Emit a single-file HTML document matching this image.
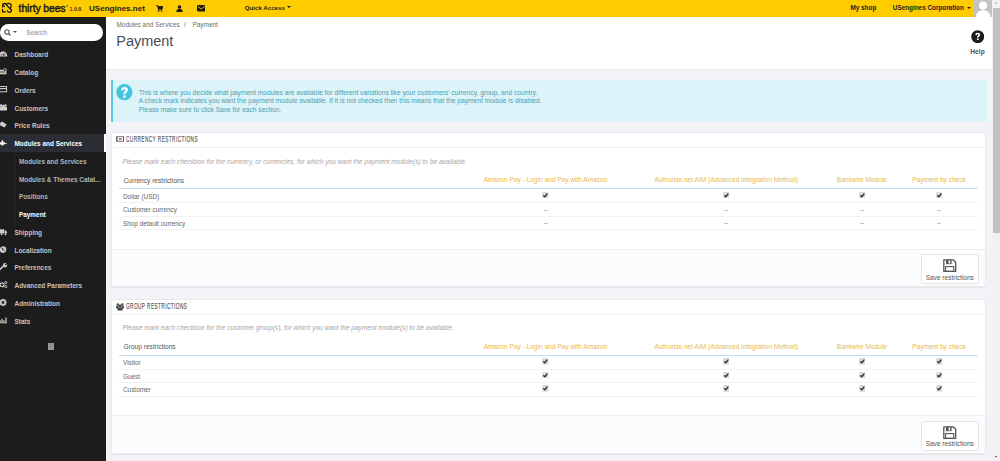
<!DOCTYPE html>
<html><head><meta charset="utf-8">
<style>
*{box-sizing:border-box}
html,body{margin:0;padding:0}
body{width:1000px;height:461px;overflow:hidden;position:relative;background:#f3f3f7;font-family:"Liberation Sans",sans-serif;color:#555}
.a{position:absolute;white-space:nowrap;line-height:1}
#hdr{position:absolute;left:0;top:0;width:993px;height:17px;background:#ffcc00}
#side{position:absolute;left:0;top:17px;width:106px;height:444px;background:#1c1c1c}
#chead{position:absolute;left:106px;top:17px;width:887px;height:53px;background:#fff;border-bottom:1px solid #e9e9ec}
#sb{position:absolute;left:992px;top:0;width:8px;height:461px;background:#f1f1f1}
#thumb{position:absolute;left:993px;top:7.5px;width:7px;height:225px;background:#c1c1c1}
.panel{position:absolute;left:111px;width:875px;background:#fff;border:1px solid #e8e8ee;border-radius:3px;box-shadow:0 1px 0 rgba(0,0,0,.05)}
.ph{position:absolute;left:2px;right:2px;top:14.2px;height:1px;background:#f0f0f0}
.pf{position:absolute;left:0;right:0;bottom:0;height:37.5px;background:#fbfcfe;border-top:1px solid #eeeeee;border-radius:0 0 3px 3px}
.btn{position:absolute;right:6px;top:4.8px;width:58px;height:29.8px;background:#fff;border:1px solid #e6e6e6;border-radius:2px}
.cb{width:6.2px;height:6.2px;background:#d4d4d4;border:0.6px solid #9a9a9a;border-radius:1px}
</style></head>
<body>
<div id="hdr"></div>
<svg class="a" style="left:0;top:1px" width="14" height="14" viewBox="0 0 14 14"><g fill="none" stroke="#1c1c1c" stroke-width="1.35" stroke-linecap="round" stroke-linejoin="round">
<path d="M2.9 6 C2.3 4.6 2.5 2.8 4.2 2.5 C5.2 2.3 5.8 2.8 6.2 3.5 L9.6 7.4"/>
<path d="M3.6 4.9 L4.4 5.3"/>
<path d="M6.2 3.5 C7 2.1 9.6 1.9 10.8 3.3 C11.7 4.5 11.1 6.6 9.6 7.4"/>
<path d="M2.5 8.4 V10.9 H5.3"/>
<path d="M7.4 9.6 C7.8 10.8 8.8 11.6 10 11.4 C11.2 11.2 11.5 10 11.3 9 C11.1 8.1 10.5 7.7 9.6 7.4"/>
</g></svg>
<div class="a" style="left:18.6px;top:4px;font-size:10.4px;color:#1c1c1c;font-weight:normal;font-style:normal;letter-spacing:-0.1px;-webkit-text-stroke:0.45px #1c1c1c;transform:scaleY(1.12);transform-origin:0 85%">thirty bees</div>
<div class="a" style="left:66.2px;top:4.6px;width:1.8px;height:1.8px;border:0.5px solid #6a5a10;border-radius:50%"></div>
<div class="a" style="left:69.6px;top:7px;font-size:5.3px;color:#3a3a10;font-weight:bold;font-style:normal;letter-spacing:-0.05px">1.0.8</div>
<div class="a" style="left:89px;top:5px;font-size:8.06px;color:#1c1c1c;font-weight:bold;font-style:normal;">USengines.net</div>
<svg class="a" style="left:155.8px;top:5.2px" width="7.4" height="6.8" viewBox="0 0 7.4 6.8"><path d="M0.3 0.5 H1.5 L2.3 4.3 H6 L6.9 1.5 H1.9" fill="#1c1c1c" stroke="#1c1c1c" stroke-width="0.9" stroke-linejoin="round"/><circle cx="2.7" cy="5.9" r="0.8" fill="#1c1c1c"/><circle cx="5.6" cy="5.9" r="0.8" fill="#1c1c1c"/></svg>
<svg class="a" style="left:176px;top:4.5px" width="7" height="7.5" viewBox="0 0 7 7.5"><circle cx="3.5" cy="2" r="1.8" fill="#1c1c1c"/><path d="M0.3 7.3 C0.3 4.6 1.6 4 3.5 4 C5.4 4 6.7 4.6 6.7 7.3 Z" fill="#1c1c1c"/></svg>
<svg class="a" style="left:197px;top:5.3px" width="8.4" height="6.4" viewBox="0 0 8.4 6.4"><rect x="0" y="0" width="8.4" height="6.4" rx="0.8" fill="#1c1c1c"/><path d="M0.6 1.4 L4.2 3.9 L7.8 1.4" fill="none" stroke="#ffcc00" stroke-width="0.8"/></svg>
<div class="a" style="left:244.8px;top:5px;font-size:6.15px;color:#1c1c1c;font-weight:bold;font-style:normal;">Quick Access</div>
<div class="a" style="left:287px;top:6.4px;width:0;height:0;border-left:2.1px solid transparent;border-right:2.1px solid transparent;border-top:2.7px solid #1c1c1c"></div>
<div class="a" style="left:850.4px;top:5px;font-size:6.4px;color:#1c1c1c;font-weight:bold;font-style:normal;">My shop</div>
<div class="a" style="left:892.8px;top:5px;font-size:6.36px;color:#1c1c1c;font-weight:bold;font-style:normal;">USengines Corporation</div>
<div class="a" style="left:967.3px;top:7px;width:0;height:0;border-left:2px solid transparent;border-right:2px solid transparent;border-top:2.5px solid #1c1c1c"></div>
<svg class="a" style="left:973.5px;top:0" width="18.5" height="17" viewBox="0 0 18.5 17"><rect width="18.5" height="17" fill="#c3c3c3"/><circle cx="9.1" cy="5.6" r="4.1" fill="#fff"/><path d="M1.9 17 C2.2 12.4 4.6 10.2 9.1 10.2 C13.6 10.2 16.2 12.4 16.5 17 Z" fill="#fff"/></svg>
<div id="side"></div>
<div class="a" style="left:-0.5px;top:24px;width:103px;height:16.7px;background:#fff;border-radius:8.3px"></div>
<svg class="a" style="left:3.8px;top:29px" width="7" height="7" viewBox="0 0 7 7"><circle cx="2.9" cy="2.9" r="2.2" fill="none" stroke="#555" stroke-width="1.1"/><path d="M4.5 4.5 L6.5 6.5" stroke="#555" stroke-width="1.3"/></svg>
<div class="a" style="left:13px;top:31.3px;width:0;height:0;border-left:2px solid transparent;border-right:2px solid transparent;border-top:2.3px solid #555"></div>
<div class="a" style="left:26.2px;top:30px;font-size:6.3px;color:#aaa;font-weight:bold;font-style:normal;">Search</div>
<div class="a" style="left:0;top:134.3px;width:104px;height:17.8px;background:#2a2e34"></div>
<div class="a" style="left:104px;top:134.3px;width:2px;height:17.8px;background:#fff"></div>
<div class="a" style="left:13.5px;top:152.70px;width:0.8px;height:71.00px;background:#2a2a2a"></div>
<div class="a" style="left:14.5px;top:52px;font-size:6.45px;color:#c4c4c4;font-weight:bold;font-style:normal;">Dashboard</div>
<div class="a" style="left:14.5px;top:70px;font-size:6.45px;color:#c4c4c4;font-weight:bold;font-style:normal;">Catalog</div>
<div class="a" style="left:14.5px;top:88px;font-size:6.45px;color:#c4c4c4;font-weight:bold;font-style:normal;">Orders</div>
<div class="a" style="left:14.5px;top:106px;font-size:6.45px;color:#c4c4c4;font-weight:bold;font-style:normal;">Customers</div>
<div class="a" style="left:14.5px;top:123px;font-size:6.45px;color:#c4c4c4;font-weight:bold;font-style:normal;">Price Rules</div>
<div class="a" style="left:14.5px;top:141px;font-size:6.45px;color:#ffffff;font-weight:bold;font-style:normal;">Modules and Services</div>
<div class="a" style="left:18.9px;top:159px;font-size:6.45px;color:#b4b4b4;font-weight:bold;font-style:normal;">Modules and Services</div>
<div class="a" style="left:18.9px;top:177px;font-size:6.45px;color:#b4b4b4;font-weight:bold;font-style:normal;">Modules &amp; Themes Catal...</div>
<div class="a" style="left:18.9px;top:194px;font-size:6.45px;color:#b4b4b4;font-weight:bold;font-style:normal;">Positions</div>
<div class="a" style="left:18.9px;top:212px;font-size:6.45px;color:#ffffff;font-weight:bold;font-style:normal;">Payment</div>
<div class="a" style="left:14.5px;top:230px;font-size:6.45px;color:#c4c4c4;font-weight:bold;font-style:normal;">Shipping</div>
<div class="a" style="left:14.5px;top:248px;font-size:6.45px;color:#c4c4c4;font-weight:bold;font-style:normal;">Localization</div>
<div class="a" style="left:14.5px;top:265px;font-size:6.45px;color:#c4c4c4;font-weight:bold;font-style:normal;">Preferences</div>
<div class="a" style="left:14.5px;top:283px;font-size:6.45px;color:#c4c4c4;font-weight:bold;font-style:normal;">Advanced Parameters</div>
<div class="a" style="left:14.5px;top:301px;font-size:6.45px;color:#c4c4c4;font-weight:bold;font-style:normal;">Administration</div>
<div class="a" style="left:14.5px;top:319px;font-size:6.45px;color:#c4c4c4;font-weight:bold;font-style:normal;">Stats</div>
<svg class="a" style="left:0;top:50.2px" width="8" height="8" viewBox="0 0 8 8"><path d="M-1.3 6.6 A4.3 5.4 0 0 1 7.3 6.6 Z" fill="#cdcdcd"/><circle cx="1.2" cy="4.8" r="0.6" fill="#1c1c1c"/><circle cx="4.8" cy="4.8" r="0.6" fill="#1c1c1c"/><path d="M3 6 L4.2 3" stroke="#1c1c1c" stroke-width="0.8"/></svg>
<svg class="a" style="left:0;top:68.4px" width="8" height="8" viewBox="0 0 8 8"><path d="M-1 1.8 H3.2 L4 0.4 H6.4 V6.2 H-1 Z" fill="#cdcdcd"/><rect x="3.9" y="1.2" width="1.8" height="1.6" fill="#1c1c1c"/><rect x="-1" y="3.6" width="6" height="0.8" fill="#1c1c1c"/></svg>
<svg class="a" style="left:0;top:86.2px" width="8" height="8" viewBox="0 0 8 8"><rect x="-1" y="0.5" width="7.6" height="5.3" fill="none" stroke="#cdcdcd" stroke-width="1"/><rect x="-1" y="2" width="7.6" height="1.2" fill="#cdcdcd"/></svg>
<svg class="a" style="left:0;top:104.2px" width="8" height="8" viewBox="0 0 8 8"><circle cx="1" cy="1.4" r="1.2" fill="#cdcdcd"/><circle cx="5.4" cy="1.4" r="1.2" fill="#cdcdcd"/><circle cx="3.2" cy="2.2" r="1.4" fill="#cdcdcd"/><path d="M-1 6.4 V3.8 C-1 3 -0.2 2.7 0.8 2.7 H5.6 C6.6 2.7 7 3.1 7 3.9 V6.4 Z" fill="#cdcdcd"/></svg>
<svg class="a" style="left:0;top:121.2px" width="8" height="8" viewBox="0 0 8 8"><path d="M-0.5 2.2 L2.2 0.6 L6.6 3.6 L4.6 6.6 L0.4 4.4 Z" fill="#cdcdcd"/></svg>
<svg class="a" style="left:0;top:138.8px" width="8" height="8" viewBox="0 0 8 8"><path d="M0 3.2 H1.6 V1.2 H3.2 V3.2 H4.6 L5.4 4 H6.8 V4.7 H5.4 L4.6 5.4 H3.2 V6.4 H1.6 V5.4 H0 Z" fill="#fff"/></svg>
<svg class="a" style="left:0;top:228.6px" width="8" height="8" viewBox="0 0 8 8"><rect x="-1" y="0.3" width="5.2" height="4.2" fill="#cdcdcd"/><path d="M4.6 1.4 H6 L7 2.8 V4.5 H4.6 Z" fill="#cdcdcd"/><circle cx="1.6" cy="5.3" r="0.9" fill="#cdcdcd"/><circle cx="5.4" cy="5.3" r="0.9" fill="#cdcdcd"/></svg>
<svg class="a" style="left:0;top:245.6px" width="8" height="8" viewBox="0 0 8 8"><circle cx="3" cy="3.6" r="3.3" fill="#cdcdcd"/><path d="M1.2 2 C2.2 1.6 3.2 2.4 2.6 3.4 C2.2 4.2 3.6 4.6 4.6 4" fill="none" stroke="#1c1c1c" stroke-width="0.9"/></svg>
<svg class="a" style="left:0;top:263px" width="8" height="8" viewBox="0 0 8 8"><path d="M0 6.4 L3.6 2.8" stroke="#cdcdcd" stroke-width="1.6" stroke-linecap="round"/><path d="M3 2.4 A2.2 2.2 0 0 1 6.2 0.2 L4.8 1.8 L5.4 2.6 L7 1.2 A2.2 2.2 0 0 1 4.2 4.2 Z" fill="#cdcdcd"/></svg>
<svg class="a" style="left:0;top:281px" width="8" height="8" viewBox="0 0 8 8"><circle cx="2" cy="3.8" r="1.9" fill="none" stroke="#cdcdcd" stroke-width="1.3"/><circle cx="5.8" cy="1.6" r="1.1" fill="none" stroke="#cdcdcd" stroke-width="0.9"/><circle cx="5.8" cy="5.6" r="1.1" fill="none" stroke="#cdcdcd" stroke-width="0.9"/></svg>
<svg class="a" style="left:0;top:298.6px" width="8" height="8" viewBox="0 0 8 8"><circle cx="3" cy="3.4" r="2.6" fill="none" stroke="#cdcdcd" stroke-width="1.5"/><path d="M3 0 V6.8 M-0.4 3.4 H6.4 M0.6 1 L5.4 5.8 M5.4 1 L0.6 5.8" stroke="#cdcdcd" stroke-width="0.8"/><circle cx="3" cy="3.4" r="1.1" fill="#1c1c1c"/></svg>
<svg class="a" style="left:0;top:317.4px" width="8" height="8" viewBox="0 0 8 8"><rect x="-1" y="5.4" width="8" height="0.9" fill="#cdcdcd"/><rect x="-0.6" y="3" width="1.2" height="2.6" fill="#cdcdcd"/><rect x="1.4" y="1.8" width="1.2" height="3.8" fill="#cdcdcd"/><rect x="3.4" y="3.2" width="1.2" height="2.4" fill="#cdcdcd"/><rect x="5.4" y="0.4" width="1.2" height="5.2" fill="#cdcdcd"/></svg>
<svg class="a" style="left:48px;top:343px" width="6" height="7.2" viewBox="0 0 6 7.2"><rect x="0" y="0" width="6" height="7.2" fill="#999"/><rect x="2" y="0.5" width="0.5" height="6.2" fill="#7c7c7c"/><rect x="3.6" y="0.5" width="0.5" height="6.2" fill="#7c7c7c"/></svg>
<div id="chead"></div>
<div class="a" style="left:116.5px;top:22px;font-size:6.44px;color:#6c6c6c;font-weight:normal;font-style:normal;">Modules and Services</div>
<div class="a" style="left:184px;top:22px;font-size:6.44px;color:#6c6c6c;font-weight:normal;font-style:normal;">/</div>
<div class="a" style="left:192.5px;top:22px;font-size:6.44px;color:#6c6c6c;font-weight:normal;font-style:normal;">Payment</div>
<div class="a" style="left:116.3px;top:34px;font-size:14.45px;color:#474c55;font-weight:normal;font-style:normal;">Payment</div>
<svg class="a" style="left:970.6px;top:29.8px" width="13.4" height="13.4" viewBox="0 0 14 14"><circle cx="7" cy="7" r="6.8" fill="#1c1c1c"/><path d="M4.6 5.2 C4.6 3.6 5.7 2.8 7.1 2.8 C8.6 2.8 9.6 3.7 9.6 4.9 C9.6 6.3 7.9 6.6 7.9 7.9 H6.2 C6.2 6.2 7.8 5.9 7.8 5 C7.8 4.5 7.5 4.2 7 4.2 C6.5 4.2 6.3 4.6 6.3 5.2 Z" fill="#fff"/><rect x="6.2" y="8.8" width="1.7" height="1.7" fill="#fff"/></svg>
<div class="a" style="left:977.5px;top:49px;font-size:6.65px;color:#555;font-weight:bold;font-style:normal;transform:translateX(-50%);">Help</div>
<div class="a" style="left:111px;top:80px;width:876px;height:42px;background:#dcf3f9;border-left:2.2px solid #58c9e2;border-radius:1px"></div>
<svg class="a" style="left:116px;top:84.4px" width="16.8" height="16.8" viewBox="0 0 16.8 16.8"><circle cx="8.4" cy="8.2" r="8.1" fill="#46c4df"/><g transform="translate(8.4 8.4) scale(1.38) translate(-7 -6.7)"><path d="M4.6 5.2 C4.6 3.6 5.7 2.8 7.1 2.8 C8.6 2.8 9.6 3.7 9.6 4.9 C9.6 6.3 7.9 6.6 7.9 7.9 H6.2 C6.2 6.2 7.8 5.9 7.8 5 C7.8 4.5 7.5 4.2 7 4.2 C6.5 4.2 6.3 4.6 6.3 5.2 Z" fill="#fff"/><rect x="6.2" y="8.8" width="1.7" height="1.7" fill="#fff"/></g></svg>
<div class="a" style="left:138.7px;top:90px;font-size:6.69px;color:#4b9fb2;font-weight:normal;font-style:normal;">This is where you decide what payment modules are available for different variations like your customers' currency, group, and country.</div>
<div class="a" style="left:138.7px;top:98px;font-size:6.66px;color:#4b9fb2;font-weight:normal;font-style:normal;">A check mark indicates you want the payment module available. If it is not checked then this means that the payment module is disabled.</div>
<div class="a" style="left:138.7px;top:107px;font-size:6.64px;color:#4b9fb2;font-weight:normal;font-style:normal;">Please make sure to click Save for each section.</div>
<div class="panel" style="top:132.0px;height:155.2px"><div class="ph"></div><div class="pf"><div class="btn"></div></div></div>
<svg class="a" style="left:115.6px;top:136.10px" width="8.6" height="6" viewBox="0 0 8.6 6"><rect x="0.4" y="0.4" width="7.8" height="5.2" rx="0.6" fill="#e6e6e6" stroke="#6a6a6a" stroke-width="0.8"/><path d="M1.1 0.9 C0.9 2.2 0.9 3.8 1.1 5.1 M7.5 0.9 C7.7 2.2 7.7 3.8 7.5 5.1" stroke="#555" stroke-width="1.2" fill="none"/><circle cx="4.3" cy="3" r="1.3" fill="#8a8a8a"/><path d="M2.4 1.4 Q1.7 3 2.4 4.6 M6.2 1.4 Q6.9 3 6.2 4.6" fill="none" stroke="#fff" stroke-width="0.6"/></svg>
<div class="a" style="left:125.9px;top:135px;font-size:8.8px;color:#555;font-weight:normal;font-style:normal;letter-spacing:0.75px;transform:scaleX(0.54);transform-origin:0 0;-webkit-text-stroke:0.15px #555">CURRENCY RESTRICTIONS</div>
<div class="a" style="left:122.4px;top:159px;font-size:6.58px;color:#a6a6a6;font-weight:normal;font-style:italic;">Please mark each checkbox for the currency, or currencies, for which you want the payment module(s) to be available.</div>
<div class="a" style="left:123.6px;top:178px;font-size:6.6px;color:#555;font-weight:normal;font-style:normal;">Currency restrictions</div>
<div class="a" style="left:545.5px;top:177px;font-size:6.55px;color:#e9b94a;font-weight:normal;font-style:normal;transform:translateX(-50%);">Amazon Pay - Login and Pay with Amazon</div>
<div class="a" style="left:726.2px;top:177px;font-size:6.55px;color:#e9b94a;font-weight:normal;font-style:normal;transform:translateX(-50%);">Authorize.net AIM (Advanced Integration Method)</div>
<div class="a" style="left:861.9px;top:177px;font-size:6.55px;color:#e9b94a;font-weight:normal;font-style:normal;transform:translateX(-50%);">Bankwire Module</div>
<div class="a" style="left:939.0px;top:177px;font-size:6.55px;color:#e9b94a;font-weight:normal;font-style:normal;transform:translateX(-50%);">Payment by check</div>
<div class="a" style="left:119.4px;top:188.00px;width:858.6px;height:1px;background:#c3e1f3"></div>
<div class="a" style="left:123px;top:194px;font-size:6.4px;color:#666;font-weight:normal;font-style:normal;">Dollar (USD)</div>
<div class="a" style="left:119.4px;top:202px;width:858.6px;height:1px;background:#f2f2f2"></div>
<svg class="a" style="left:542.20px;top:191.50px" width="6.6" height="6.8" viewBox="0 0 6.6 6.8"><rect x="0.1" y="0.1" width="6.4" height="6.6" rx="1.3" fill="#dadada"/><path d="M1.7 3.7 L2.8 4.8 L5 2" fill="none" stroke="#2a2a2a" stroke-width="1.25" stroke-linecap="round" stroke-linejoin="round"/></svg>
<svg class="a" style="left:722.90px;top:191.50px" width="6.6" height="6.8" viewBox="0 0 6.6 6.8"><rect x="0.1" y="0.1" width="6.4" height="6.6" rx="1.3" fill="#dadada"/><path d="M1.7 3.7 L2.8 4.8 L5 2" fill="none" stroke="#2a2a2a" stroke-width="1.25" stroke-linecap="round" stroke-linejoin="round"/></svg>
<svg class="a" style="left:858.60px;top:191.50px" width="6.6" height="6.8" viewBox="0 0 6.6 6.8"><rect x="0.1" y="0.1" width="6.4" height="6.6" rx="1.3" fill="#dadada"/><path d="M1.7 3.7 L2.8 4.8 L5 2" fill="none" stroke="#2a2a2a" stroke-width="1.25" stroke-linecap="round" stroke-linejoin="round"/></svg>
<svg class="a" style="left:935.70px;top:191.50px" width="6.6" height="6.8" viewBox="0 0 6.6 6.8"><rect x="0.1" y="0.1" width="6.4" height="6.6" rx="1.3" fill="#dadada"/><path d="M1.7 3.7 L2.8 4.8 L5 2" fill="none" stroke="#2a2a2a" stroke-width="1.25" stroke-linecap="round" stroke-linejoin="round"/></svg>
<div class="a" style="left:123px;top:207px;font-size:6.4px;color:#666;font-weight:normal;font-style:normal;">Customer currency</div>
<div class="a" style="left:119.4px;top:216px;width:858.6px;height:1px;background:#f2f2f2"></div>
<div class="a" style="left:543.50px;top:209.80px;width:4px;height:0.8px;background:#c4c4c4"></div>
<div class="a" style="left:724.20px;top:209.80px;width:4px;height:0.8px;background:#c4c4c4"></div>
<div class="a" style="left:859.90px;top:209.80px;width:4px;height:0.8px;background:#c4c4c4"></div>
<div class="a" style="left:937.00px;top:209.80px;width:4px;height:0.8px;background:#c4c4c4"></div>
<div class="a" style="left:123px;top:221px;font-size:6.4px;color:#666;font-weight:normal;font-style:normal;">Shop default currency</div>
<div class="a" style="left:119.4px;top:229px;width:858.6px;height:1px;background:#f2f2f2"></div>
<div class="a" style="left:543.50px;top:223.40px;width:4px;height:0.8px;background:#c4c4c4"></div>
<div class="a" style="left:724.20px;top:223.40px;width:4px;height:0.8px;background:#c4c4c4"></div>
<div class="a" style="left:859.90px;top:223.40px;width:4px;height:0.8px;background:#c4c4c4"></div>
<div class="a" style="left:937.00px;top:223.40px;width:4px;height:0.8px;background:#c4c4c4"></div>
<svg class="a" style="left:943px;top:259.10px" width="13.5" height="13.2" viewBox="0 0 13.5 13.2"><path d="M0.8 0.8 H10.2 L12.7 3.3 V12.4 H0.8 Z" fill="none" stroke="#555" stroke-width="1.3" stroke-linejoin="round"/><rect x="3" y="0.8" width="5.6" height="4.4" fill="#555"/><rect x="5.6" y="1.5" width="1.6" height="3" fill="#fff"/><rect x="2.6" y="7.6" width="8.2" height="4.8" fill="none" stroke="#555" stroke-width="1.1"/></svg>
<div class="a" style="left:949.8px;top:275px;font-size:6.53px;color:#555;font-weight:normal;font-style:normal;transform:translateX(-50%);">Save restrictions</div>
<div class="panel" style="top:298.6px;height:155.2px"><div class="ph"></div><div class="pf"><div class="btn"></div></div></div>
<svg class="a" style="left:115.9px;top:303.20px" width="8.2" height="7.4" viewBox="0 0 8.2 7.4"><circle cx="1.8" cy="1.5" r="1.3" fill="#555"/><circle cx="6.4" cy="1.5" r="1.3" fill="#555"/><path d="M0 5.4 V3.8 C0 3.1 0.6 2.8 1.2 2.8 H2.8 L2.6 5.4 Z M8.2 5.4 V3.8 C8.2 3.1 7.6 2.8 7 2.8 H5.4 L5.6 5.4 Z" fill="#555"/><circle cx="4.1" cy="2.9" r="1.5" fill="#444"/><path d="M1.6 7.4 V5.6 C1.6 4.9 2.2 4.5 2.9 4.5 H5.3 C6 4.5 6.6 4.9 6.6 5.6 V7.4 Z" fill="#444"/></svg>
<div class="a" style="left:125.9px;top:302px;font-size:8.8px;color:#555;font-weight:normal;font-style:normal;letter-spacing:0.75px;transform:scaleX(0.54);transform-origin:0 0;-webkit-text-stroke:0.15px #555">GROUP RESTRICTIONS</div>
<div class="a" style="left:122.4px;top:325px;font-size:6.58px;color:#a6a6a6;font-weight:normal;font-style:italic;">Please mark each checkbox for the customer group(s), for which you want the payment module(s) to be available.</div>
<div class="a" style="left:123.6px;top:344px;font-size:6.6px;color:#555;font-weight:normal;font-style:normal;">Group restrictions</div>
<div class="a" style="left:545.5px;top:344px;font-size:6.55px;color:#e9b94a;font-weight:normal;font-style:normal;transform:translateX(-50%);">Amazon Pay - Login and Pay with Amazon</div>
<div class="a" style="left:726.2px;top:344px;font-size:6.55px;color:#e9b94a;font-weight:normal;font-style:normal;transform:translateX(-50%);">Authorize.net AIM (Advanced Integration Method)</div>
<div class="a" style="left:861.9px;top:344px;font-size:6.55px;color:#e9b94a;font-weight:normal;font-style:normal;transform:translateX(-50%);">Bankwire Module</div>
<div class="a" style="left:939.0px;top:344px;font-size:6.55px;color:#e9b94a;font-weight:normal;font-style:normal;transform:translateX(-50%);">Payment by check</div>
<div class="a" style="left:119.4px;top:354.60px;width:858.6px;height:1px;background:#c3e1f3"></div>
<div class="a" style="left:123px;top:360px;font-size:6.4px;color:#666;font-weight:normal;font-style:normal;">Visitor</div>
<div class="a" style="left:119.4px;top:369px;width:858.6px;height:1px;background:#f2f2f2"></div>
<svg class="a" style="left:542.20px;top:358.10px" width="6.6" height="6.8" viewBox="0 0 6.6 6.8"><rect x="0.1" y="0.1" width="6.4" height="6.6" rx="1.3" fill="#dadada"/><path d="M1.7 3.7 L2.8 4.8 L5 2" fill="none" stroke="#2a2a2a" stroke-width="1.25" stroke-linecap="round" stroke-linejoin="round"/></svg>
<svg class="a" style="left:722.90px;top:358.10px" width="6.6" height="6.8" viewBox="0 0 6.6 6.8"><rect x="0.1" y="0.1" width="6.4" height="6.6" rx="1.3" fill="#dadada"/><path d="M1.7 3.7 L2.8 4.8 L5 2" fill="none" stroke="#2a2a2a" stroke-width="1.25" stroke-linecap="round" stroke-linejoin="round"/></svg>
<svg class="a" style="left:858.60px;top:358.10px" width="6.6" height="6.8" viewBox="0 0 6.6 6.8"><rect x="0.1" y="0.1" width="6.4" height="6.6" rx="1.3" fill="#dadada"/><path d="M1.7 3.7 L2.8 4.8 L5 2" fill="none" stroke="#2a2a2a" stroke-width="1.25" stroke-linecap="round" stroke-linejoin="round"/></svg>
<svg class="a" style="left:935.70px;top:358.10px" width="6.6" height="6.8" viewBox="0 0 6.6 6.8"><rect x="0.1" y="0.1" width="6.4" height="6.6" rx="1.3" fill="#dadada"/><path d="M1.7 3.7 L2.8 4.8 L5 2" fill="none" stroke="#2a2a2a" stroke-width="1.25" stroke-linecap="round" stroke-linejoin="round"/></svg>
<div class="a" style="left:123px;top:374px;font-size:6.4px;color:#666;font-weight:normal;font-style:normal;">Guest</div>
<div class="a" style="left:119.4px;top:382px;width:858.6px;height:1px;background:#f2f2f2"></div>
<svg class="a" style="left:542.20px;top:371.70px" width="6.6" height="6.8" viewBox="0 0 6.6 6.8"><rect x="0.1" y="0.1" width="6.4" height="6.6" rx="1.3" fill="#dadada"/><path d="M1.7 3.7 L2.8 4.8 L5 2" fill="none" stroke="#2a2a2a" stroke-width="1.25" stroke-linecap="round" stroke-linejoin="round"/></svg>
<svg class="a" style="left:722.90px;top:371.70px" width="6.6" height="6.8" viewBox="0 0 6.6 6.8"><rect x="0.1" y="0.1" width="6.4" height="6.6" rx="1.3" fill="#dadada"/><path d="M1.7 3.7 L2.8 4.8 L5 2" fill="none" stroke="#2a2a2a" stroke-width="1.25" stroke-linecap="round" stroke-linejoin="round"/></svg>
<svg class="a" style="left:858.60px;top:371.70px" width="6.6" height="6.8" viewBox="0 0 6.6 6.8"><rect x="0.1" y="0.1" width="6.4" height="6.6" rx="1.3" fill="#dadada"/><path d="M1.7 3.7 L2.8 4.8 L5 2" fill="none" stroke="#2a2a2a" stroke-width="1.25" stroke-linecap="round" stroke-linejoin="round"/></svg>
<svg class="a" style="left:935.70px;top:371.70px" width="6.6" height="6.8" viewBox="0 0 6.6 6.8"><rect x="0.1" y="0.1" width="6.4" height="6.6" rx="1.3" fill="#dadada"/><path d="M1.7 3.7 L2.8 4.8 L5 2" fill="none" stroke="#2a2a2a" stroke-width="1.25" stroke-linecap="round" stroke-linejoin="round"/></svg>
<div class="a" style="left:123px;top:387px;font-size:6.4px;color:#666;font-weight:normal;font-style:normal;">Customer</div>
<div class="a" style="left:119.4px;top:396px;width:858.6px;height:1px;background:#f2f2f2"></div>
<svg class="a" style="left:542.20px;top:385.30px" width="6.6" height="6.8" viewBox="0 0 6.6 6.8"><rect x="0.1" y="0.1" width="6.4" height="6.6" rx="1.3" fill="#dadada"/><path d="M1.7 3.7 L2.8 4.8 L5 2" fill="none" stroke="#2a2a2a" stroke-width="1.25" stroke-linecap="round" stroke-linejoin="round"/></svg>
<svg class="a" style="left:722.90px;top:385.30px" width="6.6" height="6.8" viewBox="0 0 6.6 6.8"><rect x="0.1" y="0.1" width="6.4" height="6.6" rx="1.3" fill="#dadada"/><path d="M1.7 3.7 L2.8 4.8 L5 2" fill="none" stroke="#2a2a2a" stroke-width="1.25" stroke-linecap="round" stroke-linejoin="round"/></svg>
<svg class="a" style="left:858.60px;top:385.30px" width="6.6" height="6.8" viewBox="0 0 6.6 6.8"><rect x="0.1" y="0.1" width="6.4" height="6.6" rx="1.3" fill="#dadada"/><path d="M1.7 3.7 L2.8 4.8 L5 2" fill="none" stroke="#2a2a2a" stroke-width="1.25" stroke-linecap="round" stroke-linejoin="round"/></svg>
<svg class="a" style="left:935.70px;top:385.30px" width="6.6" height="6.8" viewBox="0 0 6.6 6.8"><rect x="0.1" y="0.1" width="6.4" height="6.6" rx="1.3" fill="#dadada"/><path d="M1.7 3.7 L2.8 4.8 L5 2" fill="none" stroke="#2a2a2a" stroke-width="1.25" stroke-linecap="round" stroke-linejoin="round"/></svg>
<svg class="a" style="left:943px;top:425.70px" width="13.5" height="13.2" viewBox="0 0 13.5 13.2"><path d="M0.8 0.8 H10.2 L12.7 3.3 V12.4 H0.8 Z" fill="none" stroke="#555" stroke-width="1.3" stroke-linejoin="round"/><rect x="3" y="0.8" width="5.6" height="4.4" fill="#555"/><rect x="5.6" y="1.5" width="1.6" height="3" fill="#fff"/><rect x="2.6" y="7.6" width="8.2" height="4.8" fill="none" stroke="#555" stroke-width="1.1"/></svg>
<div class="a" style="left:949.8px;top:441px;font-size:6.53px;color:#555;font-weight:normal;font-style:normal;transform:translateX(-50%);">Save restrictions</div>
<div id="sb"></div><div id="thumb"></div>
<div class="a" style="left:994.7px;top:2px;width:0;height:0;border-left:1.9px solid transparent;border-right:1.9px solid transparent;border-bottom:2.5px solid #a3a3a3"></div>
<div class="a" style="left:994.7px;top:455.8px;width:0;height:0;border-left:1.9px solid transparent;border-right:1.9px solid transparent;border-top:2.5px solid #505050"></div>
</body></html>
